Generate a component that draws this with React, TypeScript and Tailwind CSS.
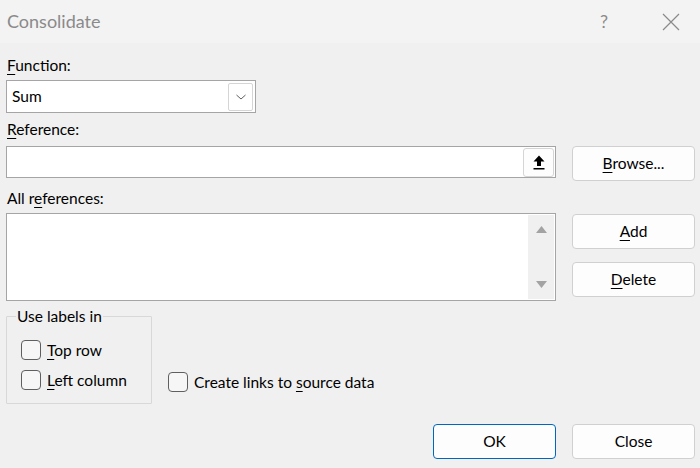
import React from "react";

function Key({ children }: { children: React.ReactNode }) {
  return <span className="underline underline-offset-[3px] decoration-1">{children}</span>;
}

function Btn({ children, primary }: { children: React.ReactNode; primary?: boolean }) {
  return (
    <button
      type="button"
      className={
        primary
          ? "flex h-[35px] w-[123px] items-center justify-center rounded-[4px] border border-[#0067c0] bg-[#fdfdfd] text-[15.5px] text-black"
          : "flex h-[35px] w-[123px] items-center justify-center rounded-[4px] border border-[#d0d0d0] bg-[#fdfdfd] text-[15.5px] text-black"
      }
    >
      {children}
    </button>
  );
}

function Check({ children }: { children: React.ReactNode }) {
  return (
    <label className="flex h-[20px] items-center gap-[6px] text-[15.5px] leading-[20px] text-black">
      <span className="block h-[20px] w-[20px] rounded-[4px] border border-[#5f5f5f] bg-[#f6f6f6]" />
      <span>{children}</span>
    </label>
  );
}

export default function App() {
  return (
    <div className="h-[468px] w-[700px] overflow-hidden bg-[#f0f0f0] font-['Segoe_UI','Lato',sans-serif] text-black">
      {/* barra de título */}
      <div className="flex h-[43px] items-center bg-[#f3f3f3] pl-[7px]">
        <span className="text-[18px] text-[#8a8a8a]">Consolidate</span>
        <span className="ml-auto mr-[54px] text-[18px] text-[#8a8a8a]">?</span>
        <svg width="18" height="18" viewBox="0 0 18 18" className="mr-[20px]">
          <path d="M1 1 L17 17 M17 1 L1 17" stroke="#8a8a8a" strokeWidth="1.2" />
        </svg>
      </div>

      <div className="flex flex-col pl-[6px] pr-[5px]">
        <div className="mt-[12px] h-[20px] pl-[1px] text-[15.5px] leading-[20px]">
          <Key>F</Key>unction:
        </div>

        {/* función */}
        <div className="mt-[5px] flex h-[33px] w-[250px] items-center border border-[#a5a5a5] bg-white pl-[5px] pr-[2px]">
          <span className="text-[15.5px]">Sum</span>
          <span className="ml-auto flex h-[28px] w-[25px] items-center justify-center rounded-[2px] border border-[#d5d5d5] bg-white">
            <svg width="12" height="8" viewBox="0 0 12 8">
              <path d="M1.5 2 L6 6 L10.5 2" fill="none" stroke="#606060" strokeWidth="1" />
            </svg>
          </span>
        </div>

        <div className="mt-[6px] h-[20px] pl-[1px] text-[15.5px] leading-[20px]">
          <Key>R</Key>eference:
        </div>

        <div className="mt-[7px] flex items-start gap-[16px]">
          <div className="flex h-[32px] w-[550px] items-center justify-end border border-[#a5a5a5] bg-white pr-[1px]">
            <span className="flex h-[29px] w-[31px] items-center justify-center rounded-[3px] border border-[#d5d5d5] bg-[#fdfdfd]">
              <svg width="12" height="15" viewBox="0 0 12 15">
                <path d="M6 0.5 L11.5 6.5 L8 6.5 L8 11 L4 11 L4 6.5 L0.5 6.5 Z" fill="#000" />
                <rect x="0.5" y="13" width="11" height="1.5" fill="#000" />
              </svg>
            </span>
          </div>
          <Btn>
            <span>
              <Key>B</Key>rowse...
            </span>
          </Btn>
        </div>

        <div className="mt-[7px] h-[20px] pl-[1px] text-[15.5px] leading-[20px]">
          All r<Key>e</Key>ferences:
        </div>

        <div className="mt-[5px] flex items-start gap-[16px]">
          <div className="flex h-[88px] w-[550px] justify-end border border-[#a5a5a5] bg-white p-[1px]">
            <div className="flex w-[26px] flex-col items-center justify-between bg-[#f0f0f0] py-[11px]">
              <svg width="11" height="7" viewBox="0 0 11 7">
                <path d="M5.5 0 L11 7 L0 7 Z" fill="#a3a3a3" />
              </svg>
              <svg width="11" height="7" viewBox="0 0 11 7">
                <path d="M0 0 L11 0 L5.5 7 Z" fill="#a3a3a3" />
              </svg>
            </div>
          </div>
          <div className="mt-[1px] flex flex-col gap-[13px]">
            <Btn>
              <span>
                <Key>A</Key>dd
              </span>
            </Btn>
            <Btn>
              <span>
                <Key>D</Key>elete
              </span>
            </Btn>
          </div>
        </div>

        {/* opciones */}
        <div className="mt-[6px] flex items-end">
          <fieldset className="h-[97px] w-[146px] rounded-[1px] border border-[#d8d8d8] pl-[14px] pt-[15px]">
            <legend className="-ml-[5px] px-[1px] text-[15.5px] leading-[18px]">Use labels in</legend>
            <div className="flex flex-col gap-[10px]">
              <Check>
                <Key>T</Key>op row
              </Check>
              <Check>
                <Key>L</Key>eft column
              </Check>
            </div>
          </fieldset>
          <div className="mb-[12px] ml-[16px]">
            <Check>
              Create links to <Key>s</Key>ource data
            </Check>
          </div>
        </div>

        <div className="mt-[20px] flex justify-end gap-[16px]">
          <Btn primary>OK</Btn>
          <Btn>Close</Btn>
        </div>
      </div>
    </div>
  );
}
